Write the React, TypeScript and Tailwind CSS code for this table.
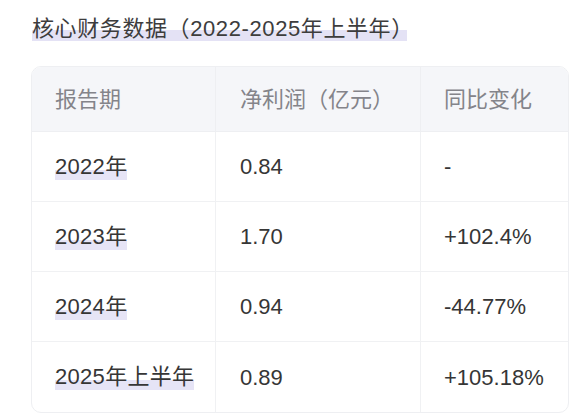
import React from "react";

const rows = [
  { p: "2022年", v: "0.84", c: "-" },
  { p: "2023年", v: "1.70", c: "+102.4%" },
  { p: "2024年", v: "0.94", c: "-44.77%" },
  { p: "2025年上半年", v: "0.89", c: "+105.18%" },
];

const font = "font-['Liberation_Sans','Noto_Sans_CJK_SC',sans-serif]";

export default function App() {
  return (
    <div className={`w-[570px] h-[414px] overflow-hidden bg-white ${font}`}>
      <div className="pl-[32px] pt-[14px] h-[66px]">
        <span className="text-[22px] leading-[30px] tracking-[0.6px] text-[#3d3d3d] bg-[linear-gradient(transparent_55%,#e4e2f5_55%)]">
          核心财务数据（2022-2025年上半年<span className="tracking-[-6px]">）</span>
        </span>
      </div>
      <div className="ml-[31px] w-[538px] rounded-[10px] border border-[#eeeff2] overflow-hidden">
        <div className="flex h-[65px] bg-[#f5f6f9] text-[#84848a] text-[22px] border-b border-[#eeeff2]">
          <div className="w-[184px] pl-[23px] flex items-center border-r border-[#eeeff2]">报告期</div>
          <div className="w-[205px] pl-[24px] flex items-center border-r border-[#eeeff2]">净利润（亿元）</div>
          <div className="flex-1 pl-[23px] flex items-center">同比变化</div>
        </div>
        {rows.map((r, i) => (
          <div
            key={r.p}
            className={`flex h-[70px] text-[22px] text-[#363636] ${i < rows.length - 1 ? "border-b border-[#f0f1f3]" : ""}`}
          >
            <div className="w-[184px] pl-[23px] flex items-center border-r border-[#f0f1f3]">
              <span className="leading-[26px] tracking-[0.3px] bg-[linear-gradient(transparent_62%,#e6e4f6_62%)]">{r.p}</span>
            </div>
            <div className="w-[205px] pl-[24px] flex items-center border-r border-[#f0f1f3]">{r.v}</div>
            <div className="flex-1 pl-[23px] flex items-center">{r.c}</div>
          </div>
        ))}
      </div>
    </div>
  );
}
